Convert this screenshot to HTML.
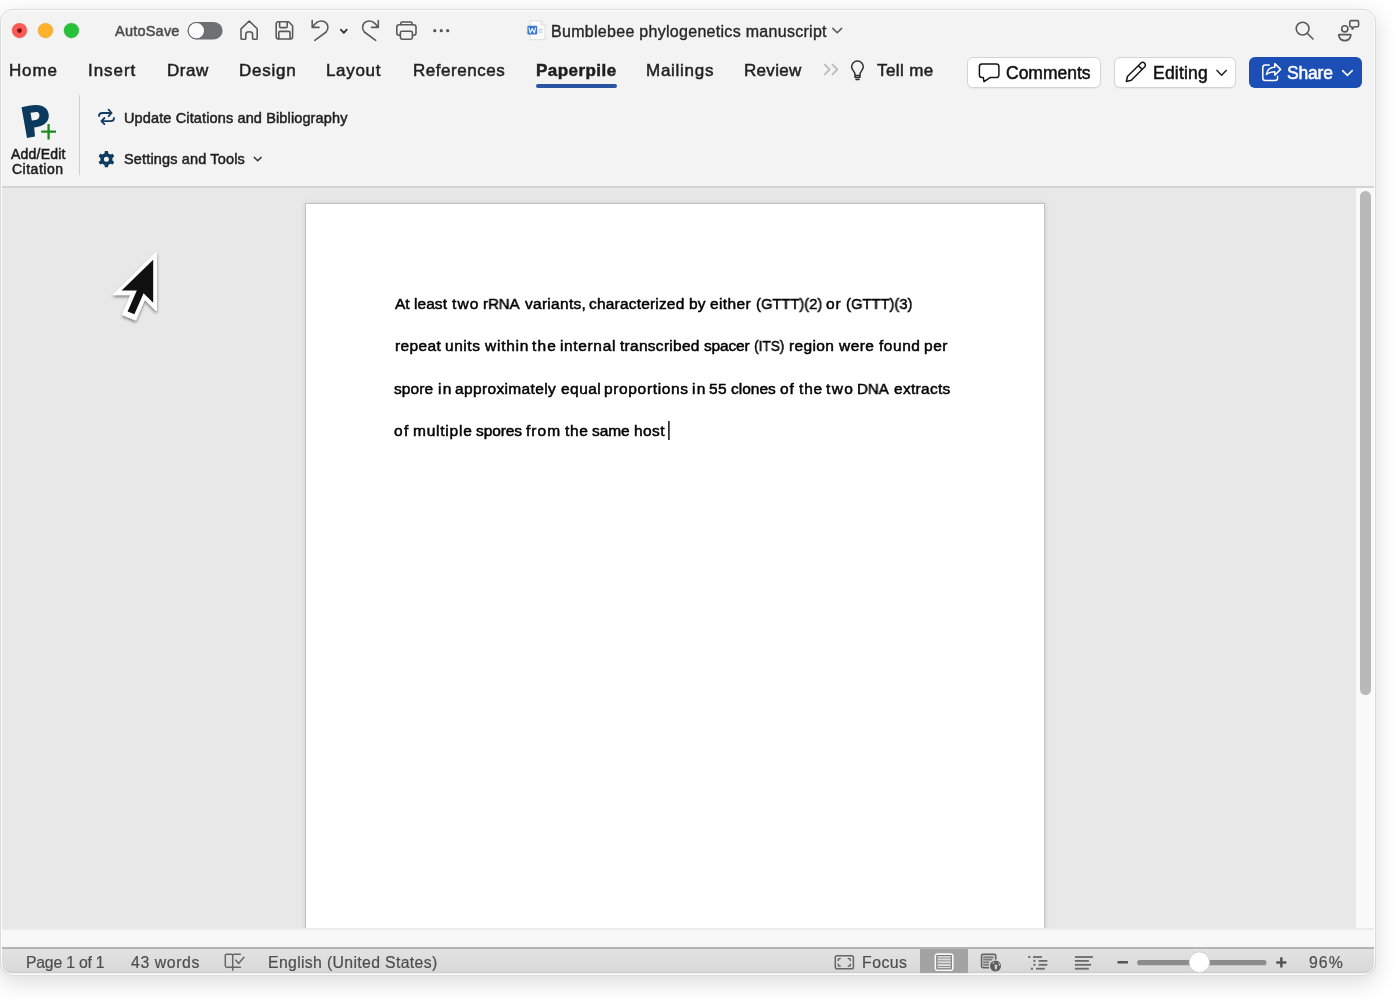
<!DOCTYPE html>
<html><head><meta charset="utf-8">
<style>
html,body{margin:0;padding:0;}
body{width:1400px;height:1000px;overflow:hidden;position:relative;background:#fff;font-family:"Liberation Sans",sans-serif;}
.win{position:absolute;left:0px;top:9px;width:1376px;height:967px;border-radius:13px;overflow:hidden;background:#f3f3f3;box-shadow:0 6px 22px rgba(0,0,0,0.15);}
.frame{position:absolute;left:0px;top:9px;width:1376px;height:967px;box-sizing:border-box;border-radius:13px;border:1px solid #d9ddd9;box-shadow:inset 0 0 0 1px rgba(255,255,255,0.9);pointer-events:none;}
.in{position:absolute;left:0px;top:-9px;width:1400px;height:1000px;}
.abs{position:absolute;}
.t{position:absolute;white-space:pre;will-change:transform;-webkit-text-stroke:0.5px currentColor;}
svg.ov{position:absolute;left:0;top:0;}
</style></head><body>
<div class="win"><div class="in">
 <div class="abs" style="left:0;top:186px;width:1400px;height:2px;background:#d3d3d3"></div>
 <div class="abs" style="left:0;top:188px;width:1356px;height:740px;background:#e8e8e8"></div>
 <div class="abs" style="left:1356px;top:188px;width:44px;height:740px;background:#f9f9f9"></div>
 <div class="abs" style="left:1360px;top:191px;width:11px;height:504px;border-radius:6px;background:#b9b9b9"></div>
 <div class="abs" style="left:305px;top:203px;width:738px;height:740px;background:#fff;border:1px solid #c2c2c2;box-shadow:0 0 5px rgba(0,0,0,0.12)"></div>
 <div class="abs" style="left:0;top:928px;width:1400px;height:19px;background:linear-gradient(#e6e6e6 0px,#efefef 1.5px,#f8f8f8 3px)"></div>
 <div class="abs" style="left:0;top:946.5px;width:1400px;height:2.5px;background:#b4b4b4"></div>
 <div class="abs" style="left:0;top:949px;width:1400px;height:22px;background:linear-gradient(#e2e2e2,#d9d9d9)"></div>
 <div class="abs" style="left:0;top:971px;width:1400px;height:2px;background:#d2d2d2"></div>
 <div class="abs" style="left:0;top:973px;width:1400px;height:3px;background:#ececec"></div>
 <div class="abs" style="left:920px;top:949px;width:48px;height:24px;background:#a3a3a3"></div>
 <div class="abs" style="left:967px;top:57px;width:132px;height:29px;border-radius:6px;background:#fff;border:1px solid #d4d4d4;box-shadow:0 1px 1px rgba(0,0,0,0.05)"></div>
 <div class="abs" style="left:1114px;top:57px;width:120px;height:29px;border-radius:6px;background:#fff;border:1px solid #d4d4d4;box-shadow:0 1px 1px rgba(0,0,0,0.05)"></div>
 <div class="abs" style="left:1249px;top:57px;width:113px;height:31px;border-radius:6px;background:#1c4fb6"></div>
 <div class="abs" style="left:536px;top:84px;width:81px;height:4px;border-radius:2px;background:#2b55a3"></div>
 <div class="abs" style="left:79px;top:95px;width:1px;height:80px;background:#cfcfcf"></div>
<span class="t" style="left:115.00px;top:22.77px;font-size:14.5px;line-height:17.4px;color:#4a4a4a;letter-spacing:0.221px;">AutoSave</span>
<span class="t" style="left:551.35px;top:21.85px;font-size:16px;line-height:19.2px;color:#262626;letter-spacing:0.292px;-webkit-text-stroke:0.35px currentColor;">Bumblebee phylogenetics manuscript</span>
<span class="t" style="left:8.75px;top:60.81px;font-size:17px;line-height:20.4px;color:#1f1f1f;letter-spacing:0.833px;">Home</span>
<span class="t" style="left:87.60px;top:60.81px;font-size:17px;line-height:20.4px;color:#1f1f1f;letter-spacing:0.960px;">Insert</span>
<span class="t" style="left:166.75px;top:60.81px;font-size:17px;line-height:20.4px;color:#1f1f1f;letter-spacing:0.500px;">Draw</span>
<span class="t" style="left:239.45px;top:60.81px;font-size:17px;line-height:20.4px;color:#1f1f1f;letter-spacing:0.770px;">Design</span>
<span class="t" style="left:326.25px;top:60.81px;font-size:17px;line-height:20.4px;color:#1f1f1f;letter-spacing:0.670px;">Layout</span>
<span class="t" style="left:413.15px;top:60.81px;font-size:17px;line-height:20.4px;color:#1f1f1f;letter-spacing:0.539px;">References</span>
<span class="t" style="left:646.25px;top:60.81px;font-size:17px;line-height:20.4px;color:#1f1f1f;letter-spacing:0.729px;">Mailings</span>
<span class="t" style="left:744.45px;top:60.81px;font-size:17px;line-height:20.4px;color:#1f1f1f;letter-spacing:0.320px;">Review</span>
<span class="t" style="left:876.75px;top:60.81px;font-size:17px;line-height:20.4px;color:#1f1f1f;letter-spacing:0.400px;">Tell me</span>
<span class="t" style="left:535.70px;top:60.81px;font-size:17px;line-height:20.4px;font-weight:700;color:#1f1f1f;letter-spacing:0.450px;">Paperpile</span>
<span class="t" style="left:1006.25px;top:62.83px;font-size:17.5px;line-height:21.0px;color:#111;letter-spacing:-0.007px;">Comments</span>
<span class="t" style="left:1152.55px;top:62.83px;font-size:17.5px;line-height:21.0px;color:#111;letter-spacing:0.208px;">Editing</span>
<span class="t" style="left:1287.25px;top:62.63px;font-size:17.5px;line-height:21.0px;color:#fff;letter-spacing:-0.188px;">Share</span>
<span class="t" style="left:10.80px;top:145.75px;font-size:14px;line-height:16.8px;color:#1a1a1a;letter-spacing:0.207px;">Add/Edit</span>
<span class="t" style="left:12.25px;top:161.25px;font-size:14px;line-height:16.8px;color:#1a1a1a;letter-spacing:0.500px;">Citation</span>
<span class="t" style="left:123.70px;top:110.27px;font-size:14.5px;line-height:17.4px;color:#1f1f1f;letter-spacing:0.130px;">Update Citations and Bibliography</span>
<span class="t" style="left:123.95px;top:151.27px;font-size:14.5px;line-height:17.4px;color:#1f1f1f;letter-spacing:0.153px;">Settings and Tools</span>
<span class="t sx" style="left:395.00px;top:294.93px;font-size:15.5px;line-height:18.6px;color:#000;-webkit-text-stroke:0.5px currentColor;">At</span>
<span class="t sx" style="left:414.00px;top:294.93px;font-size:15.5px;line-height:18.6px;color:#000;letter-spacing:0.062px;-webkit-text-stroke:0.5px currentColor;">least</span>
<span class="t sx" style="left:452.25px;top:294.93px;font-size:15.5px;line-height:18.6px;color:#000;letter-spacing:1.125px;-webkit-text-stroke:0.5px currentColor;">two</span>
<span class="t sx" style="left:483.00px;top:294.93px;font-size:15.5px;line-height:18.6px;color:#000;transform:scaleX(0.9660);transform-origin:1.00px 0;-webkit-text-stroke:0.5px currentColor;">rRNA</span>
<span class="t sx" style="left:524.50px;top:294.93px;font-size:15.5px;line-height:18.6px;color:#000;letter-spacing:0.281px;-webkit-text-stroke:0.5px currentColor;">variants,</span>
<span class="t sx" style="left:588.50px;top:294.93px;font-size:15.5px;line-height:18.6px;color:#000;letter-spacing:0.188px;-webkit-text-stroke:0.5px currentColor;">characterized</span>
<span class="t sx" style="left:688.50px;top:294.93px;font-size:15.5px;line-height:18.6px;color:#000;letter-spacing:0.250px;-webkit-text-stroke:0.5px currentColor;">by</span>
<span class="t sx" style="left:709.50px;top:294.93px;font-size:15.5px;line-height:18.6px;color:#000;letter-spacing:0.400px;-webkit-text-stroke:0.5px currentColor;">either</span>
<span class="t sx" style="left:755.70px;top:294.93px;font-size:15.5px;line-height:18.6px;color:#000;transform:scaleX(0.9491);transform-origin:1.00px 0;-webkit-text-stroke:0.5px currentColor;">(GTTT)(2)</span>
<span class="t sx" style="left:826.00px;top:294.93px;font-size:15.5px;line-height:18.6px;color:#000;letter-spacing:1.000px;-webkit-text-stroke:0.5px currentColor;">or</span>
<span class="t sx" style="left:845.50px;top:294.93px;font-size:15.5px;line-height:18.6px;color:#000;transform:scaleX(0.9520);transform-origin:1.00px 0;-webkit-text-stroke:0.5px currentColor;">(GTTT)(3)</span>
<span class="t sx" style="left:394.50px;top:337.23px;font-size:15.5px;line-height:18.6px;color:#000;letter-spacing:0.380px;-webkit-text-stroke:0.5px currentColor;">repeat</span>
<span class="t sx" style="left:444.90px;top:337.23px;font-size:15.5px;line-height:18.6px;color:#000;letter-spacing:0.538px;-webkit-text-stroke:0.5px currentColor;">units</span>
<span class="t sx" style="left:484.70px;top:337.23px;font-size:15.5px;line-height:18.6px;color:#000;letter-spacing:0.750px;-webkit-text-stroke:0.5px currentColor;">within</span>
<span class="t sx" style="left:531.75px;top:337.23px;font-size:15.5px;line-height:18.6px;color:#000;letter-spacing:1.125px;-webkit-text-stroke:0.5px currentColor;">the</span>
<span class="t sx" style="left:559.90px;top:337.23px;font-size:15.5px;line-height:18.6px;color:#000;letter-spacing:0.643px;-webkit-text-stroke:0.5px currentColor;">internal</span>
<span class="t sx" style="left:619.55px;top:337.23px;font-size:15.5px;line-height:18.6px;color:#000;letter-spacing:0.280px;-webkit-text-stroke:0.5px currentColor;">transcribed</span>
<span class="t sx" style="left:703.80px;top:337.23px;font-size:15.5px;line-height:18.6px;color:#000;letter-spacing:-0.170px;-webkit-text-stroke:0.5px currentColor;">spacer</span>
<span class="t sx" style="left:754.30px;top:337.23px;font-size:15.5px;line-height:18.6px;color:#000;transform:scaleX(0.8769);transform-origin:1.00px 0;-webkit-text-stroke:0.5px currentColor;">(ITS)</span>
<span class="t sx" style="left:788.90px;top:337.23px;font-size:15.5px;line-height:18.6px;color:#000;letter-spacing:0.370px;-webkit-text-stroke:0.5px currentColor;">region</span>
<span class="t sx" style="left:839.30px;top:337.23px;font-size:15.5px;line-height:18.6px;color:#000;letter-spacing:0.433px;-webkit-text-stroke:0.5px currentColor;">were</span>
<span class="t sx" style="left:878.95px;top:337.23px;font-size:15.5px;line-height:18.6px;color:#000;letter-spacing:0.537px;-webkit-text-stroke:0.5px currentColor;">found</span>
<span class="t sx" style="left:924.20px;top:337.23px;font-size:15.5px;line-height:18.6px;color:#000;letter-spacing:0.525px;-webkit-text-stroke:0.5px currentColor;">per</span>
<span class="t sx" style="left:394.40px;top:379.73px;font-size:15.5px;line-height:18.6px;color:#000;letter-spacing:0.113px;-webkit-text-stroke:0.5px currentColor;">spore</span>
<span class="t sx" style="left:437.60px;top:379.73px;font-size:15.5px;line-height:18.6px;color:#000;letter-spacing:1.250px;-webkit-text-stroke:0.5px currentColor;">in</span>
<span class="t sx" style="left:455.10px;top:379.73px;font-size:15.5px;line-height:18.6px;color:#000;letter-spacing:0.350px;-webkit-text-stroke:0.5px currentColor;">approximately</span>
<span class="t sx" style="left:561.00px;top:379.73px;font-size:15.5px;line-height:18.6px;color:#000;letter-spacing:0.450px;-webkit-text-stroke:0.5px currentColor;">equal</span>
<span class="t sx" style="left:604.30px;top:379.73px;font-size:15.5px;line-height:18.6px;color:#000;letter-spacing:0.650px;-webkit-text-stroke:0.5px currentColor;">proportions</span>
<span class="t sx" style="left:692.30px;top:379.73px;font-size:15.5px;line-height:18.6px;color:#000;letter-spacing:1.250px;-webkit-text-stroke:0.5px currentColor;">in</span>
<span class="t sx" style="left:709.20px;top:379.73px;font-size:15.5px;line-height:18.6px;color:#000;letter-spacing:0.400px;-webkit-text-stroke:0.5px currentColor;">55</span>
<span class="t sx" style="left:731.10px;top:379.73px;font-size:15.5px;line-height:18.6px;color:#000;letter-spacing:-0.010px;-webkit-text-stroke:0.5px currentColor;">clones</span>
<span class="t sx" style="left:780.30px;top:379.73px;font-size:15.5px;line-height:18.6px;color:#000;letter-spacing:0.800px;-webkit-text-stroke:0.5px currentColor;">of</span>
<span class="t sx" style="left:798.75px;top:379.73px;font-size:15.5px;line-height:18.6px;color:#000;letter-spacing:0.825px;-webkit-text-stroke:0.5px currentColor;">the</span>
<span class="t sx" style="left:826.05px;top:379.73px;font-size:15.5px;line-height:18.6px;color:#000;letter-spacing:1.425px;-webkit-text-stroke:0.5px currentColor;">two</span>
<span class="t sx" style="left:857.15px;top:379.73px;font-size:15.5px;line-height:18.6px;color:#000;transform:scaleX(0.9651);transform-origin:1.25px 0;-webkit-text-stroke:0.5px currentColor;">DNA</span>
<span class="t sx" style="left:893.50px;top:379.73px;font-size:15.5px;line-height:18.6px;color:#000;letter-spacing:0.293px;-webkit-text-stroke:0.5px currentColor;">extracts</span>
<span class="t sx" style="left:394.40px;top:421.93px;font-size:15.5px;line-height:18.6px;color:#000;letter-spacing:1.400px;-webkit-text-stroke:0.5px currentColor;">of</span>
<span class="t sx" style="left:412.70px;top:421.93px;font-size:15.5px;line-height:18.6px;color:#000;letter-spacing:0.764px;-webkit-text-stroke:0.5px currentColor;">multiple</span>
<span class="t sx" style="left:475.70px;top:421.93px;font-size:15.5px;line-height:18.6px;color:#000;letter-spacing:-0.120px;-webkit-text-stroke:0.5px currentColor;">spores</span>
<span class="t sx" style="left:525.75px;top:421.93px;font-size:15.5px;line-height:18.6px;color:#000;letter-spacing:1.017px;-webkit-text-stroke:0.5px currentColor;">from</span>
<span class="t sx" style="left:564.75px;top:421.93px;font-size:15.5px;line-height:18.6px;color:#000;letter-spacing:0.625px;-webkit-text-stroke:0.5px currentColor;">the</span>
<span class="t sx" style="left:592.00px;top:421.93px;font-size:15.5px;line-height:18.6px;color:#000;letter-spacing:-0.083px;-webkit-text-stroke:0.5px currentColor;">same</span>
<span class="t sx" style="left:633.50px;top:421.93px;font-size:15.5px;line-height:18.6px;color:#000;letter-spacing:0.417px;-webkit-text-stroke:0.5px currentColor;">host</span>
<span class="t" style="left:26.15px;top:953.94px;font-size:15.8px;line-height:18.96px;color:#4d4d4d;letter-spacing:-0.225px;-webkit-text-stroke:0.2px currentColor;">Page 1 of 1</span>
<span class="t" style="left:131.25px;top:953.94px;font-size:15.8px;line-height:18.96px;color:#4d4d4d;letter-spacing:0.607px;-webkit-text-stroke:0.2px currentColor;">43 words</span>
<span class="t" style="left:268.45px;top:953.94px;font-size:15.8px;line-height:18.96px;color:#4d4d4d;letter-spacing:0.348px;-webkit-text-stroke:0.2px currentColor;">English (United States)</span>
<span class="t" style="left:861.75px;top:953.94px;font-size:15.8px;line-height:18.96px;color:#4d4d4d;letter-spacing:0.500px;-webkit-text-stroke:0.2px currentColor;">Focus</span>
<span class="t" style="left:1308.85px;top:953.94px;font-size:15.8px;line-height:18.96px;color:#4d4d4d;letter-spacing:1.075px;-webkit-text-stroke:0.2px currentColor;">96%</span>
<svg class="ov" width="1400" height="1000" viewBox="0 0 1400 1000">
<circle cx="19.5" cy="30.6" r="7.4" fill="#fc5b54" stroke="#e2453f" stroke-width="0.4"/>
<circle cx="19.5" cy="30.6" r="2.4" fill="#6e1210"/>
<circle cx="45.5" cy="30.6" r="7.4" fill="#fdb12d" stroke="#e09b22" stroke-width="0.4"/>
<circle cx="71.4" cy="30.6" r="7.4" fill="#25c23a" stroke="#1aa52e" stroke-width="0.4"/>
<rect x="187.6" y="22" width="35" height="17.4" rx="8.7" fill="#6f7072"/>
<circle cx="196.4" cy="30.7" r="8.2" fill="#fbfbfb" stroke="#5e5e60" stroke-width="1"/>
<path fill="none" stroke="#5a5a5a" stroke-width="1.6" stroke-linejoin="round" stroke-linecap="round" d="M241 38.6 L241 28.8 L249.2 21 L257.2 28.8 L257.2 38.6 Q257.2 39.2 256.6 39.2 L253.2 39.2 Q252.6 39.2 252.6 38.6 L252.6 34.2 Q252.6 31.8 249.2 31.8 Q245.8 31.8 245.8 34.2 L245.8 38.6 Q245.8 39.2 245.2 39.2 L241.6 39.2 Q241 39.2 241 38.6Z"/>
<path fill="none" stroke="#5a5a5a" stroke-width="1.6" stroke-linejoin="round" stroke-linecap="round" d="M278.6 21.8 L288.6 21.8 L292.6 25.8 L292.6 36.8 Q292.6 39 290.4 39 L278.4 39 Q276.2 39 276.2 36.8 L276.2 24 Q276.2 21.8 278.4 21.8Z"/>
<path fill="none" stroke="#5a5a5a" stroke-width="1.6" stroke-linejoin="round" stroke-linecap="round" d="M279.6 22 L279.6 26.4 Q279.6 27.6 280.8 27.6 L286 27.6 Q287.2 27.6 287.2 26.4 L287.2 22"/>
<path fill="none" stroke="#5a5a5a" stroke-width="1.6" stroke-linejoin="round" stroke-linecap="round" d="M278.8 38.8 L278.8 32.6 Q278.8 31.4 280 31.4 L288.8 31.4 Q290 31.4 290 32.6 L290 38.8"/>
<path fill="none" stroke="#5a5a5a" stroke-width="1.6" stroke-linejoin="round" stroke-linecap="round" d="M312.2 20.6 L312.2 27.4 L319 27.4 M312.6 27 C316 22, 320.5 20.2, 324 21.6 C328.2 23.4, 329.2 28.6, 326.2 32 L314.8 40.4"/>
<path fill="none" stroke="#333" stroke-width="1.8" stroke-linecap="round" stroke-linejoin="round" d="M340.8 29.6 L343.8 32.8 L346.8 29.6"/>
<path fill="none" stroke="#5a5a5a" stroke-width="1.6" stroke-linejoin="round" stroke-linecap="round" transform="translate(690.5 0) scale(-1 1)" d="M312.2 20.6 L312.2 27.4 L319 27.4 M312.6 27 C316 22, 320.5 20.2, 324 21.6 C328.2 23.4, 329.2 28.6, 326.2 32 L314.8 40.4"/>
<path fill="none" stroke="#5a5a5a" stroke-width="1.6" stroke-linejoin="round" stroke-linecap="round" d="M400.8 24.6 L400.8 23.2 Q400.8 22 402 22 L410.8 22 Q412 22 412 23.2 L412 24.6"/>
<path fill="none" stroke="#5a5a5a" stroke-width="1.6" stroke-linejoin="round" stroke-linecap="round" d="M400 35.2 L399 35.2 Q396.8 35.2 396.8 33 L396.8 27.2 Q396.8 24.8 399.2 24.8 L413.6 24.8 Q416 24.8 416 27.2 L416 33 Q416 35.2 413.8 35.2 L412.6 35.2"/>
<path fill="none" stroke="#5a5a5a" stroke-width="1.6" stroke-linejoin="round" stroke-linecap="round" d="M402 31.2 L410.8 31.2 Q412.4 31.2 412.4 32.8 L412.4 37.6 Q412.4 39.2 410.8 39.2 L402 39.2 Q400.4 39.2 400.4 37.6 L400.4 32.8 Q400.4 31.2 402 31.2Z"/>
<circle cx="434.8" cy="30.7" r="1.6" fill="#555"/>
<circle cx="441.3" cy="30.7" r="1.6" fill="#555"/>
<circle cx="447.7" cy="30.7" r="1.6" fill="#555"/>
<path d="M530 20.8 L541 20.8 L545 24.8 L545 39.6 L530 39.6Z" fill="#fdfdfd" stroke="#d6d6d6" stroke-width="0.8"/>
<path d="M541 20.8 L541 24.8 L545 24.8" fill="#eee" stroke="#d6d6d6" stroke-width="0.8"/>
<rect x="538.5" y="29" width="4" height="1.2" fill="#b8c8e0"/><rect x="538.5" y="31.4" width="4" height="1.2" fill="#b8c8e0"/>
<rect x="527.4" y="25.8" width="9.8" height="8.8" rx="1" fill="#3f78cf"/>
<path d="M528.9 27.6 L530.3 32.8 L532.3 28.6 L534.3 32.8 L535.7 27.6" fill="none" stroke="#fff" stroke-width="1.1" stroke-linejoin="round"/>
<path d="M832.8 28.4 L837.2 32.8 L841.6 28.4" fill="none" stroke="#5a5a5a" stroke-width="1.5" stroke-linecap="round" stroke-linejoin="round"/>
<circle cx="1302.6" cy="28.6" r="6.4" fill="none" stroke="#5a5a5a" stroke-width="1.6" stroke-linejoin="round" stroke-linecap="round"/>
<path fill="none" stroke="#5a5a5a" stroke-width="1.6" stroke-linejoin="round" stroke-linecap="round" d="M1307.2 33.2 L1313 39"/>
<circle cx="1344.8" cy="28.8" r="3.1" fill="none" stroke="#5a5a5a" stroke-width="1.6" stroke-linejoin="round" stroke-linecap="round"/>
<path fill="none" stroke="#5a5a5a" stroke-width="1.6" stroke-linejoin="round" stroke-linecap="round" d="M1339 34.6 L1350.6 34.6 Q1351 34.6 1350.9 35 Q1350 40.6 1344.8 40.6 Q1339.6 40.6 1338.7 35 Q1338.6 34.6 1339 34.6Z"/>
<path fill="none" stroke="#5a5a5a" stroke-width="1.6" stroke-linejoin="round" stroke-linecap="round" d="M1351.2 20.6 L1357.2 20.6 Q1358.6 20.6 1358.6 22 L1358.6 25.4 Q1358.6 26.8 1357.2 26.8 L1354.4 26.8 L1352.2 29.2 L1352 26.8 L1351.2 26.8 Q1349.8 26.8 1349.8 25.4 L1349.8 22 Q1349.8 20.6 1351.2 20.6Z"/>
<path d="M824.8 64.6 L829.6 69.5 L824.8 74.4 M832.5 64.6 L837.3 69.5 L832.5 74.4" fill="none" stroke="#bdbdbd" stroke-width="1.9" stroke-linecap="round" stroke-linejoin="round"/>
<path fill="none" stroke="#2e2e2e" stroke-width="1.5" stroke-linejoin="round" stroke-linecap="round" d="M855 74.2 C855 71.6, 851.6 70, 851.6 66.8 A5.85 5.85 0 1 1 863.3 66.8 C863.3 70, 860 71.6, 860 74.2 L860 77 Q860 77.6 859.4 77.6 L855.6 77.6 Q855 77.6 855 77 Z M855 75.6 L860 75.6"/>
<path fill="none" stroke="#2e2e2e" stroke-width="1.5" stroke-linejoin="round" stroke-linecap="round" d="M856 79.6 L859 79.6"/>
<path fill="none" stroke="#151515" stroke-width="1.5" stroke-linejoin="round" stroke-linecap="round" d="M983.3 77.6 L981.9 77.6 A2.5 2.5 0 0 1 979.4 75.1 L979.4 66.4 A2.5 2.5 0 0 1 981.9 63.9 L996.4 63.9 A2.5 2.5 0 0 1 998.9 66.4 L998.9 75.1 A2.5 2.5 0 0 1 996.4 77.6 L990 77.6 L984 81.6 L983.3 77.6Z"/>
<g transform="translate(1126.4 81.4) rotate(-45)"><path fill="none" stroke="#151515" stroke-width="1.5" stroke-linejoin="round" stroke-linecap="round" d="M0 0 L4.2 -2.7 L23 -2.7 A2.7 2.7 0 0 1 23 2.7 L4.2 2.7 Z M19.6 -2.7 L19.6 2.7"/></g>
<path d="M1217 70.4 L1221.6 75.2 L1226.2 70.4" fill="none" stroke="#222" stroke-width="1.5" stroke-linecap="round" stroke-linejoin="round"/>
<path fill="none" stroke="#fff" stroke-width="1.5" stroke-linejoin="round" stroke-linecap="round" d="M1269.2 64.9 L1265.3 64.9 Q1262.8 64.9 1262.8 67.4 L1262.8 77.9 Q1262.8 80.4 1265.3 80.4 L1275.1 80.4 Q1277.6 80.4 1277.6 77.9 L1277.6 76.2"/>
<path fill="none" stroke="#fff" stroke-width="1.5" stroke-linejoin="round" stroke-linecap="round" d="M1266.4 74.5 C1267.4 69.6, 1270.8 67.2, 1274.8 67.2 L1274.8 63.6 L1280.6 69.4 L1274.8 75.1 L1274.8 71.8 C1271.2 71.8, 1268.6 72.6, 1266.4 74.5 Z"/>
<path d="M1342.6 70.6 L1347.4 75.4 L1352.2 70.6" fill="none" stroke="#fff" stroke-width="1.5" stroke-linecap="round" stroke-linejoin="round"/>
<path fill="#0c3a5e" fill-rule="evenodd" d="M21.5 107.3 C26 106, 31 105, 36 105 C44 105, 48.8 109.5, 48.8 115.8 C48.8 122.6, 42.5 127, 34.2 127.5 L35 136.6 L27 138 Z M30.5 112.8 L36.4 112 C38.6 111.8, 39.6 113.8, 39.4 116 C39.2 118.4, 37.6 119.6, 35.6 120 L31.8 120.6 Z"/>
<path d="M41.2 131.7 L56 131.7 M48.6 124 L48.6 139.4" stroke="#1b8a1b" stroke-width="2.3"/>
<path fill="none" stroke="#133c63" stroke-width="1.8" stroke-linejoin="round" stroke-linecap="round" d="M99 116 C99 114, 100.4 113, 102.4 113 L111 113 M108.6 109.7 L111.6 113 L108.6 116.2"/>
<path fill="none" stroke="#133c63" stroke-width="1.8" stroke-linejoin="round" stroke-linecap="round" d="M114 118 C114 120, 112.6 121.1, 110.6 121.1 L102 121.1 M104.4 118 L101.4 121.1 L104.4 124.2"/>
<path fill="#0e3b60" fill-rule="evenodd" d="M104.45 153.42 L104.84 151.05 L107.96 151.05 L108.35 153.42 L110.43 154.62 L112.68 153.78 L114.24 156.47 L112.38 157.99 L112.38 160.41 L114.24 161.93 L112.68 164.62 L110.43 163.78 L108.35 164.98 L107.96 167.35 L104.84 167.35 L104.45 164.98 L102.37 163.78 L100.12 164.62 L98.56 161.93 L100.42 160.41 L100.42 157.99 L98.56 156.47 L100.12 153.78 L102.37 154.62Z M108.9 159.2 A2.5 2.5 0 1 0 103.9 159.2 A2.5 2.5 0 1 0 108.9 159.2Z"/>
<path d="M254.4 157.4 L257.7 160.8 L261 157.4" fill="none" stroke="#333" stroke-width="1.5" stroke-linecap="round" stroke-linejoin="round"/>
<defs><filter id="cs" x="-50%" y="-50%" width="200%" height="200%"><feGaussianBlur in="SourceAlpha" stdDeviation="1.6"/><feOffset dx="0" dy="1.5"/><feComponentTransfer><feFuncA type="linear" slope="0.45"/></feComponentTransfer><feMerge><feMergeNode/><feMergeNode in="SourceGraphic"/></feMerge></filter></defs>
<path filter="url(#cs)" d="M156.4 252 L156.4 311 L144.6 299.2 L135.6 320 L122.4 314.6 L131 294.6 L113.2 294.6 Z" fill="#fff" stroke="#fff" stroke-width="1" stroke-linejoin="round"/>
<path d="M153.2 259.8 L153.2 302.8 L143.6 293.2 L134.4 314.2 L127.6 311.4 L136.8 290.6 L121.6 290.6 Z" fill="#111"/>
<rect x="668.2" y="421" width="1.4" height="19" fill="#000"/>
<path fill="none" stroke="#666" stroke-width="1.5" stroke-linejoin="round" stroke-linecap="round" d="M232.7 970.3 L232.7 955.6 Q232.7 954.2 231.3 954.2 L226.7 954.2 Q225.3 954.2 225.3 955.6 L225.3 965.8 Q225.3 967.2 226.7 967.2 L240.4 967.2 M232.7 955.6 Q232.7 954.3 234.1 954.3 L240.4 954.3 M235.8 960.2 L238.6 963.6 L244 957.2"/>
<rect x="835.3" y="955.7" width="18.1" height="13.1" rx="1.8" fill="none" stroke="#666" stroke-width="1.5" stroke-linejoin="round" stroke-linecap="round"/>
<path fill="none" stroke="#666" stroke-width="1.5" stroke-linejoin="round" stroke-linecap="round" d="M838.2 960.4 Q838.2 958.4 840.2 958.4 M848.4 958.4 Q850.4 958.4 850.4 960.4 M850.4 964.2 Q850.4 966.2 848.4 966.2 M840.2 966.2 Q838.2 966.2 838.2 964.2"/>
<rect x="935.4" y="954.1" width="17.4" height="16.2" rx="2.2" fill="none" stroke="#fafafa" stroke-width="1.6"/>
<rect x="937" y="955.6" width="14.2" height="13.2" fill="#dcdcdc" stroke="#707070" stroke-width="0.9"/>
<rect x="937.6" y="957.6" width="13" height="0.9" fill="#8a8a8a"/>
<rect x="937.6" y="960.4" width="13" height="0.9" fill="#8a8a8a"/>
<rect x="937.6" y="963.2" width="13" height="0.9" fill="#8a8a8a"/>
<rect x="937.6" y="966" width="13" height="0.9" fill="#8a8a8a"/>
<rect x="981.5" y="954.3" width="14.3" height="13.4" rx="1.4" fill="#c4c4c4" stroke="#636363" stroke-width="1.5"/>
<rect x="983.2" y="956.5" width="10.2" height="1.6" fill="#7c7c7c"/>
<rect x="983.2" y="958.8000000000001" width="9" height="1.6" fill="#7c7c7c"/>
<rect x="983.2" y="961.5" width="6" height="1.6" fill="#7c7c7c"/>
<rect x="983.2" y="964.0" width="6" height="1.6" fill="#7c7c7c"/>
<circle cx="995.5" cy="966" r="6.6" fill="#dedede"/>
<circle cx="995.5" cy="966" r="5.5" fill="#5c5c5c"/>
<path d="M992 963.6 Q993 961.8 994.6 961.4 L993.8 963.4 Z M994.4 964.4 L997.4 965 L997 968.2 L995.6 970.4 L994.8 967.6 Z M998.2 962.2 Q1000 963.4 1000.4 965.6 L999 965.8 Z" fill="#d4d4d4"/>
<rect x="1028.3" y="956" width="2" height="2" fill="#6a6a6a"/>
<rect x="1033.1" y="956.1" width="8.8" height="1.8" fill="#6a6a6a"/>
<rect x="1033.4" y="959.9" width="2" height="2" fill="#6a6a6a"/>
<rect x="1038.6" y="960.0" width="8.8" height="1.8" fill="#6a6a6a"/>
<rect x="1033.4" y="963.8" width="2" height="2" fill="#6a6a6a"/>
<rect x="1038.6" y="963.9" width="8.8" height="1.8" fill="#6a6a6a"/>
<rect x="1030.9" y="967.7" width="2" height="2" fill="#6a6a6a"/>
<rect x="1036" y="967.8000000000001" width="8.8" height="1.8" fill="#6a6a6a"/>
<rect x="1074.9" y="956.1" width="18.0" height="1.8" fill="#6a6a6a"/>
<rect x="1074.9" y="960.0" width="14.0" height="1.8" fill="#6a6a6a"/>
<rect x="1074.9" y="963.9" width="16.2" height="1.8" fill="#6a6a6a"/>
<rect x="1074.9" y="967.8000000000001" width="14.0" height="1.8" fill="#6a6a6a"/>
<rect x="1117.5" y="961" width="10.5" height="2.6" rx="0.6" fill="#555"/>
<rect x="1137.1" y="960.1" width="129.4" height="5.1" rx="2.55" fill="#8c8c8c"/>
<circle cx="1199.4" cy="962.2" r="10.3" fill="#fff" stroke="#c6c6c6" stroke-width="0.7"/>
<path d="M1276.3 962.4 L1286.4 962.4 M1281.35 957.2 L1281.35 967.6" stroke="#555" stroke-width="2.5"/>
</svg>
</div></div>
<div class="frame"></div>
</body></html>
